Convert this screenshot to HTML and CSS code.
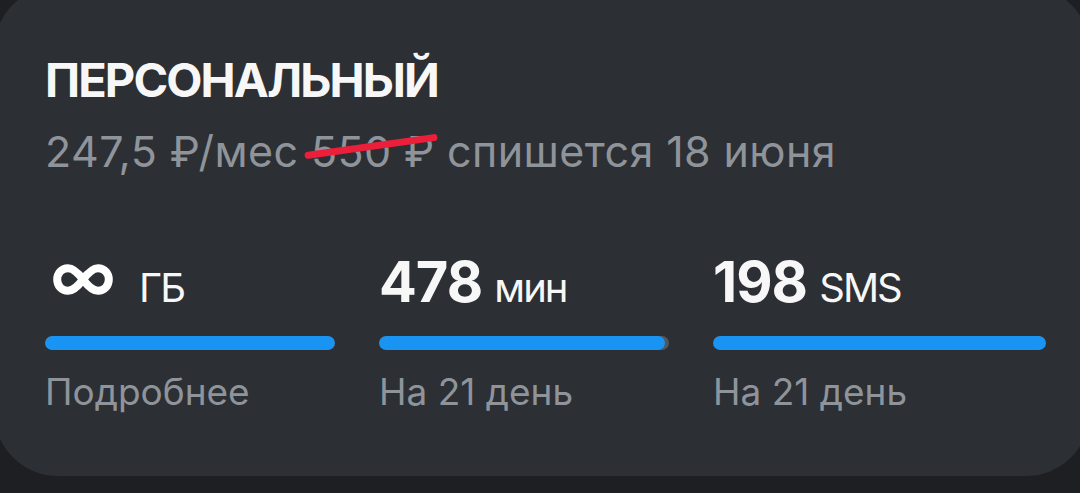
FILE: index.html
```html
<!DOCTYPE html>
<html lang="ru">
<head>
<meta charset="utf-8">
<link rel="stylesheet" href="styles.css">
</head>
<body>
<div class="card">
  <h1 class="title">ПЕРСОНАЛЬНЫЙ</h1>
  <p class="price">247,5 ₽/мес <span class="old">550 ₽</span> спишется 18 июня</p>
  <div class="stats">
    <div class="stat">
      <div class="value"><svg class="inf" width="60" height="31" viewBox="0 0 60 31"><path d="M30,15.5 C24,7.5 19.5,4.2 15,4.2 C8.3,4.2 4.2,9.5 4.2,15.5 C4.2,21.5 8.3,26.8 15,26.8 C19.5,26.8 24,23.5 30,15.5 C36,7.5 40.5,4.2 45,4.2 C51.7,4.2 55.8,9.5 55.8,15.5 C55.8,21.5 51.7,26.8 45,26.8 C40.5,26.8 36,23.5 30,15.5 Z" fill="none" stroke="#fff" stroke-width="8"/></svg><span class="unit">ГБ</span></div>
      <div class="track"><div class="fill" style="width:100%"></div></div>
      <div class="label">Подробнее</div>
    </div>
    <div class="stat">
      <div class="value"><span class="num">478</span> <span class="unit">мин</span></div>
      <div class="track"><div class="fill" style="width:98.5%"></div></div>
      <div class="label">На 21 день</div>
    </div>
    <div class="stat stat-wide">
      <div class="value"><span class="num">198</span> <span class="unit">SMS</span></div>
      <div class="track"><div class="fill" style="width:100%"></div></div>
      <div class="label">На 21 день</div>
    </div>
  </div>
</div>
</body>
</html>
```

FILE: styles.css
```css
html, body {
  margin: 0;
  padding: 0;
}
body {
  background: #1d1f23;
  width: 1080px;
  height: 493px;
  overflow: hidden;
  font-family: Inter, "Noto Sans", sans-serif;
}
.card {
  box-sizing: border-box;
  margin-left: -6px;
  margin-top: -14px;
  width: 1096px;
  height: 490px;
  border-radius: 64px;
  background: #2c2f34;
  padding: 66px 44px 0 51px;
}
.title {
  margin: 0;
  font-size: 47px;
  line-height: 56px;
  font-weight: 700;
  letter-spacing: -1.9px;
  color: #f7f7f7;
}
.price {
  margin: 18px 0 0;
  font-size: 43px;
  line-height: 50px;
  letter-spacing: 0.4px;
  color: #8f949b;
}
.old {
  position: relative;
}
.old::after {
  content: "";
  position: absolute;
  left: -7px;
  right: -3px;
  top: 18px;
  height: 7px;
  border-radius: 4px;
  background: #ec1f3b;
  transform: rotate(-8deg);
}
.stats {
  margin-top: 74px;
  display: flex;
  gap: 44px;
}
.stat {
  width: 290px;
  flex: none;
}
.stat-wide {
  flex: 1;
}
.value {
  height: 64px;
  font-size: 56px;
  line-height: 64px;
  font-weight: 700;
  letter-spacing: -1px;
  color: #f7f7f7;
  white-space: nowrap;
}
.unit {
  font-size: 40px;
  line-height: 1;
  font-weight: 400;
  letter-spacing: -2px;
}
.inf {
  vertical-align: 7px;
  margin-left: 8px;
  margin-right: 26px;
}
.track {
  margin-top: 22px;
  height: 14px;
  border-radius: 7px;
  background: #53575d;
  overflow: hidden;
}
.fill {
  height: 100%;
  border-radius: 7px;
  background: #1a94f2;
}
.label {
  margin-top: 20px;
  font-size: 37px;
  line-height: 44px;
  color: #8f949b;
}
```
